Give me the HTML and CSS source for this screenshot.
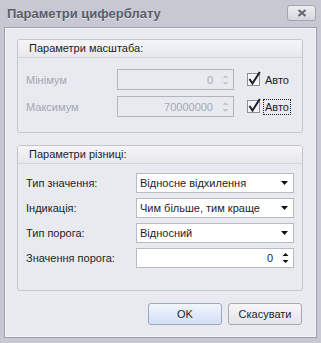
FILE: index.html
```html
<!DOCTYPE html>
<html lang="uk">
<head>
    <meta charset="UTF-8">
    <title>Параметри циферблату</title>
    <link rel="stylesheet" href="styles.css">
</head>
<body>
    <div class="window">
        <div class="titlebar">
            <span class="title">Параметри циферблату</span>
            <div class="close">
                <svg width="10" height="8" viewBox="0 0 10 8"><path d="M1.5 1 L8.5 7 M8.5 1 L1.5 7" stroke="#666977" stroke-width="2.2"/></svg>
            </div>
        </div>

        <div class="client">
            <!-- scale -->
            <div class="group group-scale">
                <div class="group-head">Параметри масштаба:</div>
                <div class="group-body">
                    <div class="row">
                        <span class="label disabled">Мінімум</span>
                        <div class="spin-input disabled">
                            <span class="value">0</span>
                            <svg class="spin" width="7" height="12" viewBox="0 0 7 12"><path d="M0.5 4 L3.5 1 L6.5 4 Z M0.5 8 L3.5 11 L6.5 8 Z" fill="#c6c8cf"/></svg>
                        </div>
                        <div class="check">
                            <svg width="16" height="16" viewBox="0 0 16 16"><rect x="0.5" y="3.5" width="12" height="12" fill="#f4f4f6" stroke="#8c8e9a"/><path d="M2.5 9 L5.5 13.5 L12.8 2" fill="none" stroke="#1d1d29" stroke-width="2"/></svg>
                            <span class="check-text">Авто</span>
                        </div>
                    </div>
                    <div class="row">
                        <span class="label disabled">Максимум</span>
                        <div class="spin-input disabled">
                            <span class="value">70000000</span>
                            <svg class="spin" width="7" height="12" viewBox="0 0 7 12"><path d="M0.5 4 L3.5 1 L6.5 4 Z M0.5 8 L3.5 11 L6.5 8 Z" fill="#c6c8cf"/></svg>
                        </div>
                        <div class="check">
                            <svg width="16" height="16" viewBox="0 0 16 16"><rect x="0.5" y="3.5" width="12" height="12" fill="#f4f4f6" stroke="#8c8e9a"/><path d="M2.5 9 L5.5 13.5 L12.8 2" fill="none" stroke="#1d1d29" stroke-width="2"/></svg>
                            <span class="check-text focused">Авто</span>
                        </div>
                    </div>
                </div>
            </div>

            <!-- difference -->
            <div class="group group-diff">
                <div class="group-head">Параметри різниці:</div>
                <div class="group-body">
                    <div class="row">
                        <span class="label">Тип значення:</span>
                        <div class="combo"><span>Відносне відхилення</span><svg width="7" height="4" viewBox="0 0 7 4"><path d="M0 0 L7 0 L3.5 4 Z" fill="#111"/></svg></div>
                    </div>
                    <div class="row">
                        <span class="label">Індикація:</span>
                        <div class="combo"><span>Чим більше, тим краще</span><svg width="7" height="4" viewBox="0 0 7 4"><path d="M0 0 L7 0 L3.5 4 Z" fill="#111"/></svg></div>
                    </div>
                    <div class="row">
                        <span class="label">Тип порога:</span>
                        <div class="combo"><span>Відносний</span><svg width="7" height="4" viewBox="0 0 7 4"><path d="M0 0 L7 0 L3.5 4 Z" fill="#111"/></svg></div>
                    </div>
                    <div class="row">
                        <span class="label">Значення порога:</span>
                        <div class="combo number">
                            <span class="value">0</span>
                            <svg class="spin" width="7" height="12" viewBox="0 0 7 12"><path d="M0.5 4 L3.5 1 L6.5 4 Z M0.5 8 L3.5 11 L6.5 8 Z" fill="#111"/></svg>
                        </div>
                    </div>
                </div>
            </div>

            <div class="buttons">
                <button class="btn btn-ok">OK</button>
                <button class="btn">Скасувати</button>
            </div>
        </div>
    </div>
</body>
</html>
```

FILE: styles.css
```css
/* Global */
html, body {
    margin: 0;
    padding: 0;
}

body {
    font-family: 'Liberation Sans', Arial, sans-serif;
    font-size: 11px;
    color: #1e1e1e;
}

/* Window frame */
.window {
    width: 321px;
    height: 343px;
    box-sizing: border-box;
    padding: 0 4px 5px 4px;
    background-color: #c7c8d1;
    display: flex;
    flex-direction: column;
}

.titlebar {
    height: 27px;
    display: flex;
    justify-content: space-between;
    align-items: flex-start;
}

.title {
    margin: 6px 0 0 3px;
    font-size: 13px;
    font-weight: bold;
    color: #5a5d6b;
    text-shadow: 0 1px 0 #e2e3e9;
}

.close {
    width: 27px;
    height: 14px;
    margin: 5px 1px 0 0;
    border: 1px solid #a3a5b1;
    border-radius: 3px;
    background: linear-gradient(#eeeef2, #d6d7de);
    display: flex;
    align-items: center;
    justify-content: center;
}

.client {
    flex: 1;
    border: 1px solid #9c9eab;
    box-shadow: inset 0 0 0 1px #f6f6f9;
    background-color: #e9eaef;
    padding: 11px 13px 12px 12px;
    display: flex;
    flex-direction: column;
}

/* Group boxes */
.group {
    border: 1px solid #c4c6cd;
    border-radius: 3px;
}

.group-diff {
    margin-top: 12px;
}

.group-head {
    height: 17px;
    line-height: 17px;
    padding-left: 11px;
    border-bottom: 1px solid #d3d4da;
    border-radius: 2px 2px 0 0;
    background: linear-gradient(#f6f6f8, #e7e8ec);
    color: #1e1e1e;
}

.group-body {
    display: flex;
    flex-direction: column;
}

.group-scale .group-body {
    padding: 11px 8px 15px 8px;
    gap: 6px;
}

.group-diff .group-body {
    padding: 9px 8px 22px 8px;
    gap: 5px;
}

.row {
    display: flex;
    align-items: center;
}

.group-scale .row {
    height: 21px;
}

.group-diff .row {
    height: 20px;
}

.group-scale .label {
    width: 91px;
}

.group-diff .label {
    width: 110px;
}

.disabled {
    color: #a4a7b5;
}

/* Spin editors */
.spin-input {
    width: 117px;
    height: 21px;
    box-sizing: border-box;
    border: 1px solid #b3b5be;
    display: flex;
    align-items: center;
    justify-content: flex-end;
    padding-right: 4px;
}

.spin-input .value,
.combo.number .value {
    margin-right: 9px;
}

/* Check boxes */
.check {
    margin-left: 13px;
    display: flex;
    align-items: center;
    margin-top: -3px;
}

.check-text {
    margin-left: 0;
    margin-top: 3px;
    padding: 1px 1px;
    border: 1px dotted transparent;
    color: #1a1a2a;
}

.check-text.focused {
    border-color: #222;
}

/* Combos */
.combo {
    width: 158px;
    height: 20px;
    box-sizing: border-box;
    border: 1px solid #b9bbc3;
    background-color: #fff;
    display: flex;
    align-items: center;
    justify-content: space-between;
    padding: 0 5px 0 3px;
}

.combo.number {
    justify-content: flex-end;
    padding-right: 4px;
}

/* Buttons */
.buttons {
    margin-top: 12px;
    display: flex;
    justify-content: flex-end;
    gap: 6px;
    padding-right: 1px;
}

.btn {
    width: 74px;
    height: 22px;
    border: 1px solid #a5a8b5;
    border-radius: 3px;
    background: linear-gradient(#f8f8fa, #e2e3e8);
    font-family: inherit;
    font-size: 11px;
    color: #1e1e1e;
    padding: 0;
}

.btn-ok {
    border-color: #9ea6c2;
    background: linear-gradient(#f1f5fd, #d3dff6);
}
```
